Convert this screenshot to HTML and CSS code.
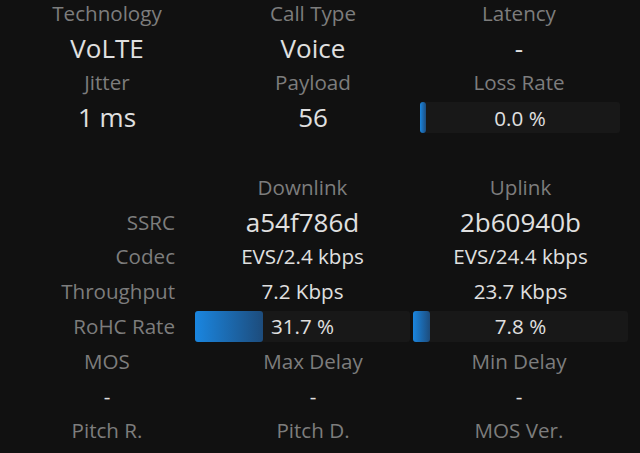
FILE: index.html
```html
<!DOCTYPE html>
<html>
<head>
	<meta charset="UTF-8">
	<title>Call Stats</title>
	<link rel="stylesheet" href="styles.css">
</head>

<body>

<div class="page">
	<!-- 概要 -->
	<div class="grid">
		<div class="lab">Technology</div>
		<div class="lab">Call Type</div>
		<div class="lab">Latency</div>

		<div class="val big">VoLTE</div>
		<div class="val big">Voice</div>
		<div class="val big">-</div>

		<div class="lab">Jitter</div>
		<div class="lab">Payload</div>
		<div class="lab">Loss Rate</div>

		<div class="val big">1 ms</div>
		<div class="val big">56</div>
		<div class="cell-bar">
			<div class="bar loss">
				<div class="fill" style="width: 0%;"></div>
				<span>0.0 %</span>
			</div>
		</div>

		<div class="blank"></div>
		<div class="blank"></div>
		<div class="blank"></div>
	</div>

	<!-- 上下行 -->
	<div class="grid links">
		<div class="blank"></div>
		<div class="lab">Downlink</div>
		<div class="lab">Uplink</div>

		<div class="lab side">SSRC</div>
		<div class="val big">a54f786d</div>
		<div class="val big">2b60940b</div>

		<div class="lab side">Codec</div>
		<div class="val">EVS/2.4 kbps</div>
		<div class="val">EVS/24.4 kbps</div>

		<div class="lab side">Throughput</div>
		<div class="val">7.2 Kbps</div>
		<div class="val">23.7 Kbps</div>

		<div class="lab side">RoHC Rate</div>
		<div class="bar">
			<div class="fill" style="width: 31.7%;"></div>
			<span>31.7 %</span>
		</div>
		<div class="bar">
			<div class="fill" style="width: 7.8%;"></div>
			<span>7.8 %</span>
		</div>
	</div>

	<div class="grid">
		<div class="lab">MOS</div>
		<div class="lab">Max Delay</div>
		<div class="lab">Min Delay</div>

		<div class="val">-</div>
		<div class="val">-</div>
		<div class="val">-</div>

		<div class="lab">Pitch R.</div>
		<div class="lab">Pitch D.</div>
		<div class="lab">MOS Ver.</div>
	</div>
</div>

</body>
</html>
```

FILE: styles.css
```css
*{ margin: 0; padding: 0; box-sizing: border-box;}
html, body{ background: #111111; overflow: hidden;}
body{ font-family: "Open Sans", "Noto Sans", sans-serif; color: #e0e0e0;}

.page{ margin-top: -4.2px; padding-left: 4px;}

.grid{ display: grid; grid-template-columns: 206px 206px 206px; grid-auto-rows: 34.8px;}
.lab, .val{ text-align: center; line-height: 34.8px; white-space: nowrap;}
.lab{ font-size: 20.6px; color: #7d7d7d;}
.val{ font-size: 20.6px; color: #e0e0e0;}
.val.big{ font-size: 26px;}

/* 上下行：标签列右对齐 */
.links{ grid-template-columns: 188px 215px 215px; column-gap: 3px; align-items: center;}
.side{ text-align: right; padding-right: 17px;}

/* 进度条 */
.cell-bar{ display: flex; align-items: center; padding: 0 2px 0 4px;}
.bar{ position: relative; height: 31px; border-radius: 3px; background: #181818; display: flex; align-items: center; justify-content: center; font-size: 20.6px; color: #e0e0e0;}
.bar.loss{ width: 200px;}
.bar span{ position: relative;}
.fill{ position: absolute; left: 0; top: 0; bottom: 0; min-width: 6px; border-radius: 3px; background: linear-gradient(to right, #1a86e0, #1d4c7c);}
```
